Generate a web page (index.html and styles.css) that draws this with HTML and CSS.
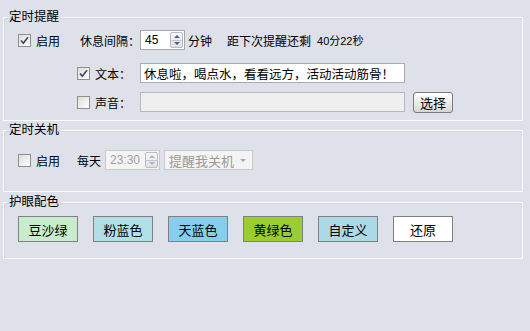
FILE: index.html
```html
<!DOCTYPE html>
<html>
  <head>
    <meta charset="utf-8">
    <link rel="stylesheet" href="styles.css">
  </head>
  <body>
    <div class="panel">
      <fieldset class="group group-remind">
        <legend>定时提醒</legend>
        <div class="row">
          <label class="opt opt-enable">
            <span class="box"><svg width="13" height="13" viewBox="0 0 13 13"><path d="M3 6.5 L5.3 9.2 L10 3.2" /></svg></span>启用
          </label>
          <span class="lbl lbl-interval">休息间隔：</span>
          <span class="spin spin-interval">
            <span class="val">45</span>
            <span class="arrows"><i class="up"></i><i class="down"></i></span>
          </span>
          <span class="lbl lbl-minute">分钟</span>
          <span class="lbl">距下次提醒还剩</span>
          <span class="countdown">40分22秒</span>
        </div>
        <div class="row row-text">
          <label class="opt opt-sub">
            <span class="box"><svg width="13" height="13" viewBox="0 0 13 13"><path d="M3 6.5 L5.3 9.2 L10 3.2" /></svg></span>文本：
          </label>
          <span class="field">休息啦，喝点水，看看远方，活动活动筋骨！</span>
        </div>
        <div class="row row-sound">
          <label class="opt opt-sub">
            <span class="box"></span>声音：
          </label>
          <span class="field field-off"></span>
          <button class="btn-pick">选择</button>
        </div>
      </fieldset>

      <fieldset class="group group-shutdown">
        <legend>定时关机</legend>
        <div class="row">
          <label class="opt opt-enable2">
            <span class="box"></span>启用
          </label>
          <span class="lbl lbl-day">每天</span>
          <span class="spin spin-time off">
            <span class="val">23:30</span>
            <span class="arrows"><i class="up"></i><i class="down"></i></span>
          </span>
          <span class="combo off">提醒我关机<i class="caret"></i></span>
        </div>
      </fieldset>

      <fieldset class="group group-color">
        <legend>护眼配色</legend>
        <div class="swatches">
          <button class="swatch bean">豆沙绿</button>
          <button class="swatch powder">粉蓝色</button>
          <button class="swatch sky">天蓝色</button>
          <button class="swatch yellowgreen">黄绿色</button>
          <button class="swatch custom">自定义</button>
          <button class="swatch reset">还原</button>
        </div>
      </fieldset>
    </div>
  </body>
</html>
```

FILE: styles.css
```css
body {
  margin: 0;
  background-color: #dfe1ea;
  font-family: "Liberation Sans", "Noto Sans CJK SC", sans-serif;
  font-size: 12px;
  color: #000;
}
.panel {
  padding: 10px 0 0 3px;
  width: 520px;
}
.group {
  box-sizing: border-box;
  width: 520px;
  margin: 0;
  padding: 0 0 0 14px;
  border: 1px solid #fbfbfd;
  box-shadow: inset 1px 1px 0 #d3d6df;
}
.group legend {
  margin-left: -11px;
  padding: 0 2px;
  line-height: 14px;
  font-size: 12.5px;
}
.group-remind {
  padding-top: 6px;
  padding-bottom: 8px;
}
.group-shutdown {
  margin-top: 2px;
  padding-top: 13px;
  padding-bottom: 21px;
}
.group-color {
  margin-top: 3px;
  padding-top: 7px;
  padding-bottom: 16px;
}
.row {
  display: flex;
  align-items: center;
  height: 20px;
}
.row-text {
  margin-top: 13px;
}
.row-sound {
  margin-top: 9px;
}
.opt {
  display: flex;
  align-items: center;
  gap: 5px;
}
.opt-enable {
  width: 62px;
}
.opt-enable2 {
  width: 59px;
}
.opt-sub {
  margin-left: 59px;
  width: 62px;
}
.box {
  box-sizing: border-box;
  width: 13px;
  height: 13px;
  border: 1px solid #8e8f8f;
  background: linear-gradient(135deg, #dcdcd7, #ffffff);
  display: flex;
}
.box svg {
  margin: -1px;
}
.box path {
  fill: none;
  stroke: #3b4a70;
  stroke-width: 1.7;
}
.lbl-interval {
  width: 60px;
}
.lbl-minute {
  width: 39px;
  margin-left: 3px;
}
.lbl-day {
  width: 28px;
}
.countdown {
  margin-left: 6px;
  font-size: 11px;
}
.spin {
  box-sizing: border-box;
  display: flex;
  align-items: center;
  justify-content: space-between;
  height: 20px;
  background: #fff;
  border: 1px solid #a7a6aa;
  padding: 0 1px 0 4px;
}
.spin-interval {
  width: 45px;
}
.spin-time {
  width: 55px;
  margin-right: 4px;
}
.spin.off {
  background: #f4f4f4;
  border-color: #c9c9c9;
  color: #a0a0a0;
}
.arrows {
  box-sizing: border-box;
  display: flex;
  flex-direction: column;
  width: 13px;
  height: 16px;
  border: 1px solid #b8bcc6;
  border-radius: 2px;
  background: linear-gradient(#f7f7f9, #dfe1e8);
}
.arrows i {
  flex: 1;
  display: flex;
  align-items: center;
  justify-content: center;
}
.arrows .up {
  border-bottom: 1px solid #c3c6cf;
}
.arrows .up::after,
.arrows .down::after {
  content: "";
  border-left: 3px solid transparent;
  border-right: 3px solid transparent;
}
.arrows .up::after {
  border-bottom: 3px solid #4d6185;
}
.arrows .down::after {
  border-top: 3px solid #4d6185;
}
.off .arrows .up::after {
  border-bottom-color: #b0b4bd;
}
.off .arrows .down::after {
  border-top-color: #b0b4bd;
}
.field {
  box-sizing: border-box;
  width: 265px;
  height: 20px;
  padding: 0 3px;
  display: flex;
  align-items: center;
  background: #fff;
  border: 1px solid #a5acb5;
  font-size: 12.5px;
  white-space: nowrap;
  overflow: hidden;
  margin-left: 1px;
}
.field-off {
  background: #efefef;
  border-color: #b5b7bb;
}
.btn-pick {
  box-sizing: border-box;
  width: 40px;
  height: 21px;
  margin-left: 8px;
  padding: 0;
  font: inherit;
  font-size: 13px;
  border: 1px solid #7b7b7b;
  border-radius: 3px;
  background: linear-gradient(#ffffff, #e9e9e6 60%, #d6d5d0);
}
.combo {
  box-sizing: border-box;
  position: relative;
  display: flex;
  align-items: center;
  width: 89px;
  height: 20px;
  padding-left: 4px;
  background: #f4f4f4;
  border: 1px solid #c9c9c9;
  color: #9a9a9a;
  font-size: 13px;
}
.caret {
  position: absolute;
  right: 6px;
  top: 8px;
  border-left: 3px solid transparent;
  border-right: 3px solid transparent;
  border-top: 3px solid #a8a8a8;
}
.swatches {
  display: flex;
  gap: 15px;
}
.swatch {
  box-sizing: border-box;
  width: 60px;
  height: 26px;
  padding: 0;
  font: inherit;
  font-size: 13px;
  color: #000;
  border: 1px solid #808080;
}
.bean {
  background: #c7edcc;
}
.powder {
  background: #b0e0e6;
}
.sky {
  background: #87ceeb;
}
.yellowgreen {
  background: #9acd32;
}
.custom {
  background: #add8e6;
}
.reset {
  background: #fff;
}
```
